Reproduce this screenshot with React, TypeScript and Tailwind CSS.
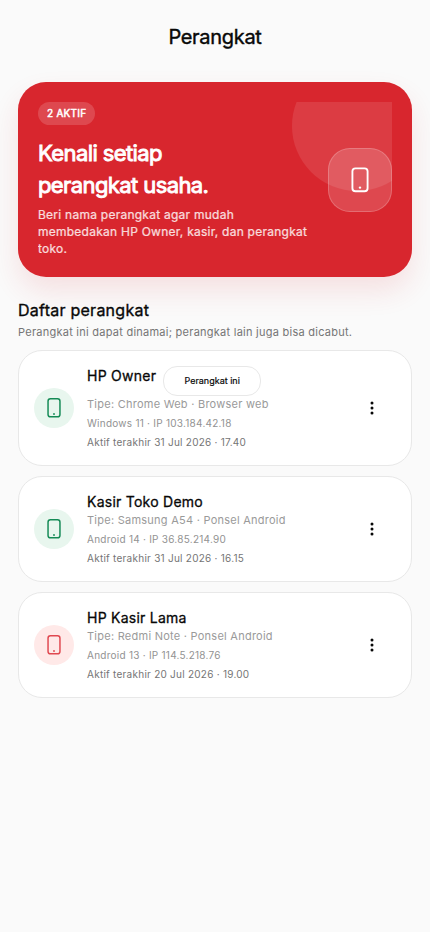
import React from "react";

interface Device {
  name: string;
  type: string;
  system: string;
  lastActive: string;
  active: boolean;
  current?: boolean;
}

const devices: Device[] = [
  {
    name: "HP Owner",
    type: "Tipe: Chrome Web · Browser web",
    system: "Windows 11 · IP 103.184.42.18",
    lastActive: "Aktif terakhir 31 Jul 2026 · 17.40",
    active: true,
    current: true,
  },
  {
    name: "Kasir Toko Demo",
    type: "Tipe: Samsung A54 · Ponsel Android",
    system: "Android 14 · IP 36.85.214.90",
    lastActive: "Aktif terakhir 31 Jul 2026 · 16.15",
    active: true,
  },
  {
    name: "HP Kasir Lama",
    type: "Tipe: Redmi Note · Ponsel Android",
    system: "Android 13 · IP 114.5.218.76",
    lastActive: "Aktif terakhir 20 Jul 2026 · 19.00",
    active: false,
  },
];

const PhoneIcon: React.FC<{ className?: string }> = ({ className }) => (
  <svg viewBox="0 0 24 24" fill="none" className={className}>
    <rect
      x="5.5"
      y="2"
      width="13"
      height="19.6"
      rx="2.6"
      stroke="currentColor"
      strokeWidth="1.6"
    />
    <circle cx="12" cy="18.5" r="1" fill="currentColor" />
  </svg>
);

const HeroCard: React.FC = () => (
  <section className="rounded-[28px] bg-[#d8262e] p-5 shadow-[0_14px_28px_rgba(216,38,46,0.12)]">
    <div className="relative flex h-[155px] items-center justify-between overflow-hidden">
      <div className="absolute -top-[41px] -right-[30px] size-[130px] rounded-full bg-white/10" />
      <div className="flex h-full w-[276px] flex-col items-start">
        <span className="flex h-[23px] items-center rounded-full bg-white/16 px-[9px] text-[10px] tracking-[0.25px] text-white [-webkit-text-stroke:0.5px_white]">
          {devices.filter((d) => d.active).length} AKTIF
        </span>
        <h2 className="mt-3 text-[22px] leading-8 tracking-[-0.6px] text-white [-webkit-text-stroke:0.9px_white]">
          Kenali setiap
          <br />
          perangkat usaha.
        </h2>
        <p className="mt-[5px] text-[12px] leading-[17px] tracking-[0.25px] text-white/80 [-webkit-text-stroke:0.2px]">
          Beri nama perangkat agar mudah membedakan HP Owner, kasir, dan
          perangkat toko.
        </p>
      </div>
      <div className="relative flex size-16 shrink-0 items-center justify-center rounded-[22px] border border-white/20 bg-white/16 text-white">
        <PhoneIcon className="size-7" />
      </div>
    </div>
  </section>
);

const DeviceCard: React.FC<{ device: Device }> = ({ device }) => (
  <li className="flex items-center rounded-3xl border border-[#e8e8e8] bg-white p-[15px]">
    <div
      className={
        device.active
          ? "flex size-10 shrink-0 items-center justify-center rounded-full bg-[#e8f6ee] text-[#148a55]"
          : "flex size-10 shrink-0 items-center justify-center rounded-full bg-[#ffe9e8] text-[#e04850]"
      }
    >
      <PhoneIcon className="size-[22px]" />
    </div>
    <div className="ml-[13px] flex-1">
      <div className="flex items-start gap-[7px]">
        <h3 className="text-[14px] leading-5 tracking-[0.25px] text-[#080808] [-webkit-text-stroke:0.3px]">
          {device.name}
        </h3>
        {device.current && (
          <span className="flex h-[30px] w-[98px] items-center justify-center rounded-[14px] border border-[#e8e8e8] text-[9px] text-[#080808] [-webkit-text-stroke:0.2px]">
            Perangkat ini
          </span>
        )}
      </div>
      <p className="text-[11px] leading-4 tracking-[0.25px] text-[#9a9a9a]">
        {device.type}
      </p>
      <p className="mt-[3px] text-[10px] leading-4 tracking-[0.25px] text-[#929292]">
        {device.system}
      </p>
      <p className="mt-[3px] text-[10px] leading-4 tracking-[0.25px] text-[#757575]">
        {device.lastActive}
      </p>
    </div>
    <button
      type="button"
      aria-label="Menu"
      className="flex size-12 items-center justify-center text-[#080808]"
    >
      <svg viewBox="0 0 24 24" fill="currentColor" className="size-6">
        <circle cx="12" cy="7" r="1.5" />
        <circle cx="12" cy="12" r="1.5" />
        <circle cx="12" cy="17" r="1.5" />
      </svg>
    </button>
  </li>
);

const App: React.FC = () => {
  return (
    <div className="min-h-screen bg-[#fafafa] px-[18px] font-['Inter',sans-serif]">
      <header className="flex h-[82px] items-start justify-center pt-[23px]">
        <h1 className="text-[20px] leading-7 tracking-[-0.3px] text-[#080808] [-webkit-text-stroke:0.4px]">
          Perangkat
        </h1>
      </header>
      <main>
        <HeroCard />
        <h2 className="mt-[22px] text-[16px] leading-[22px] tracking-[0.25px] text-[#080808] [-webkit-text-stroke:0.35px]">
          Daftar perangkat
        </h2>
        <p className="mt-[3px] text-[11px] leading-4 tracking-[0.25px] text-[#757575]">
          Perangkat ini dapat dinamai; perangkat lain juga bisa dicabut.
        </p>
        <ul className="mt-[10px] flex flex-col gap-[10px]">
          {devices.map((device) => (
            <DeviceCard key={device.name} device={device} />
          ))}
        </ul>
      </main>
    </div>
  );
};

export default App;
